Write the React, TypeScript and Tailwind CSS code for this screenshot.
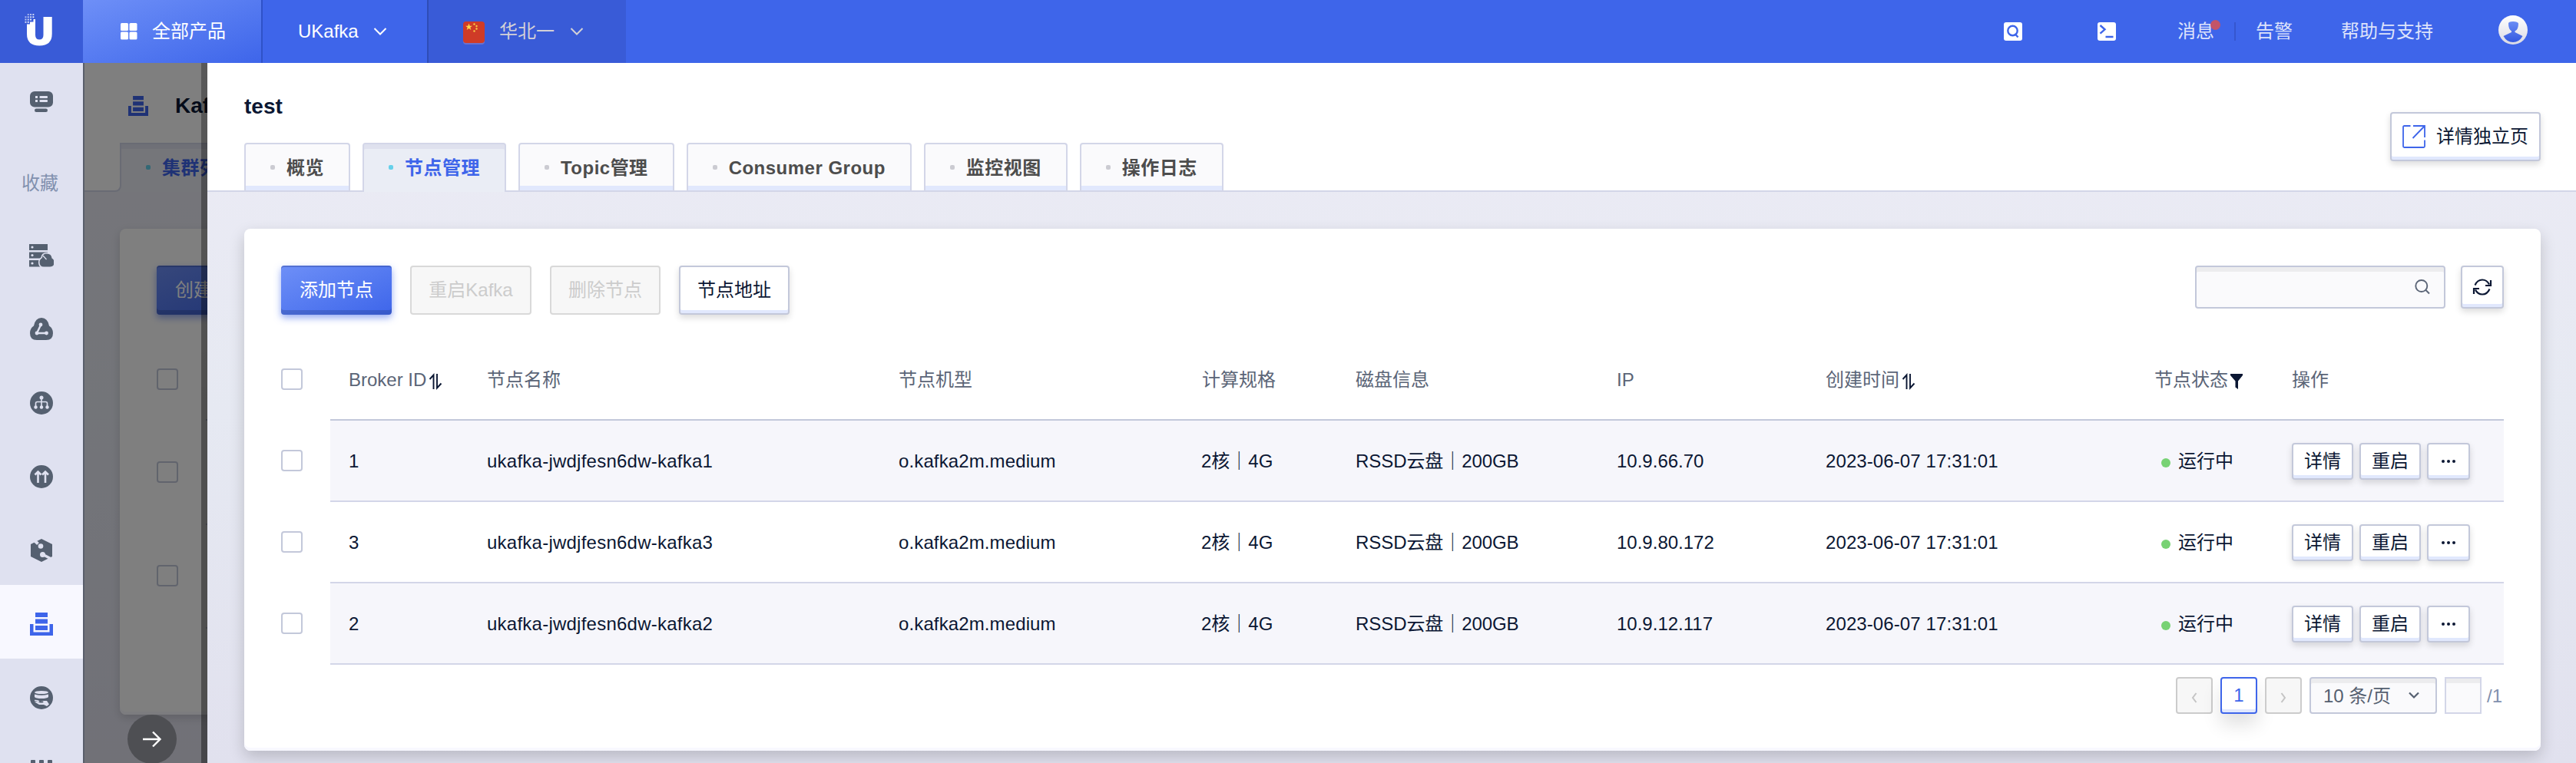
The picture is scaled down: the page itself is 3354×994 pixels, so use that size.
import React from "react";

const columns = "grid grid-cols-[180px_536px_395px_200px_340px_272px_428px_179px_1fr]";

const nodes = [
  { id: "1", name: "ukafka-jwdjfesn6dw-kafka1", ip: "10.9.66.70" },
  { id: "3", name: "ukafka-jwdjfesn6dw-kafka3", ip: "10.9.80.172" },
  { id: "2", name: "ukafka-jwdjfesn6dw-kafka2", ip: "10.9.12.117" },
];

const tabs = ["概览", "节点管理", "Topic管理", "Consumer Group", "监控视图", "操作日志"];

function Logo() {
  return (
    <svg width="44" height="46" viewBox="0 0 44 46" fill="#fff">
      <path d="M11.500 9H14V29.500Q14 35.500 19.300 35.500T24.500 29.500V6H35.700V28Q35.700 43.500 19.300 43.500T3 28V15.500H7V12.500H11.500Z" />
      {[0.5, 3.8, 7.1, 10.4].map((x, i) =>
        [2, 5.3, 8.6, 11.9].map((y, j) =>
          i + j > 0 && i + j < 5 ? (
            <rect key={`${x}-${y}`} x={x} y={y} width="1.900" height="1.900" opacity={0.5 + 0.1 * (i + j)} />
          ) : null,
        ),
      )}
    </svg>
  );
}

function Chevron({ color = "#fff" }: { color?: string }) {
  return (
    <svg width="18" height="12" viewBox="0 0 18 12" fill="none" stroke={color} strokeWidth="2">
      <path d="M1.500 2L9 9.500L16.500 2" />
    </svg>
  );
}

function KafkaIcon({ color, size }: { color: string; size: number }) {
  return (
    <svg width={size} height={size} viewBox="0 0 30 30" fill={color}>
      <path d="M7 0h16v6H7zM7 8.500h16v6H7zM7 17h16v6H7zM0 15h4.500v10.500h21V15H30v15H0z" />
    </svg>
  );
}

function Flag() {
  return (
    <svg width="28" height="30" viewBox="0 0 28 30">
      <rect y="4" width="28" height="26" rx="4" fill="#8f7fc4" opacity=".6" />
      <rect width="28" height="28" rx="4" fill="#cf3b27" />
      <path d="M7.500 2.500l1.200 3.200h3.200l-2.600 2l1 3.300l-2.800-2l-2.800 2l1-3.300l-2.600-2h3.200z" fill="#fbd84a" />
      <g fill="#f7c843">
        <circle cx="14.500" cy="3.500" r="1.200" />
        <circle cx="17.500" cy="6" r="1.200" />
        <circle cx="17.500" cy="9.500" r="1.200" />
        <circle cx="14.500" cy="12.500" r="1.200" />
      </g>
    </svg>
  );
}

function TopBar() {
  return (
    <header className="flex h-[82px] shrink-0 items-stretch bg-[#3e65ea] text-white">
      <div className="flex w-[108px] items-center bg-[#395bd7] pb-[4px] pl-[32px]">
        <Logo />
      </div>
      <div className="flex w-[232px] items-center bg-linear-to-br from-[#6e8ff7] to-[#3e65ea] pl-[49px]">
        <svg width="22" height="22" viewBox="0 0 22 22" fill="#fff">
          <rect width="10" height="10" rx="1.500" />
          <rect x="11.500" width="10" height="10" rx="1.500" />
          <rect y="11.500" width="10" height="10" rx="1.500" />
          <rect x="11.500" y="11.500" width="10" height="10" rx="1.500" />
        </svg>
        <span className="ml-[19px]">全部产品</span>
      </div>
      <div className="flex w-[216px] items-center border-l-2 border-[#2f52c8] pl-[46px]">
        <span>UKafka</span>
        <span className="ml-[19px]"><Chevron /></span>
      </div>
      <div className="flex w-[259px] items-center border-l-2 border-[#2f4db7] bg-[#395bd7] pl-[45px] text-[#d3d1d6]">
        <span className="pt-[4px]"><Flag /></span>
        <span className="ml-[19px]">华北一</span>
        <span className="ml-[20px]"><Chevron color="#d3d1d6" /></span>
      </div>
      <div className="flex flex-1 items-center justify-end pr-[63px] text-[#dde3fb]">
        <svg width="24" height="24" viewBox="0 0 24 24" fill="none" className="mr-[98px]">
          <rect width="24" height="24" rx="3" fill="#fff" />
          <circle cx="11.500" cy="11" r="6.200" stroke="#3e65ea" strokeWidth="2.400" />
          <path d="M14.500 15l4 4.500" stroke="#3e65ea" strokeWidth="2.400" />
        </svg>
        <svg width="24" height="24" viewBox="0 0 24 24" fill="none" className="mr-[80px]">
          <rect width="24" height="24" rx="3" fill="#fff" />
          <path d="M3.500 4l6 5.300l-6 5.300M10.500 19h10" stroke="#3e65ea" strokeWidth="2.400" />
        </svg>
        <span className="relative">
          消息
          <i className="absolute top-[3px] left-[43px] size-[13px] rounded-full bg-[#c35468]" />
        </span>
        <i className="mr-[26px] ml-[26px] h-[24px] w-[2px] bg-[#3556cf]" />
        <span>告警</span>
        <span className="ml-[63px]">帮助与支持</span>
        <svg width="38" height="38" viewBox="0 0 38 38" className="mb-[4px] ml-[85px]">
          <defs>
            <linearGradient id="ring" x1="0" y1="0" x2="0" y2="1">
              <stop offset="0" stopColor="#fff" />
              <stop offset="1" stopColor="#d9d9e4" />
            </linearGradient>
            <linearGradient id="person" x1="0" y1="0" x2="0" y2="1">
              <stop offset="0" stopColor="#6a8cf5" />
              <stop offset="1" stopColor="#3459e0" />
            </linearGradient>
          </defs>
          <circle cx="19" cy="19" r="19" fill="url(#ring)" />
          <path d="M13 10.500Q13 8 19 8T26 10.500Q26 19 21.500 20.500V22L31.500 27Q27 35 19 35T6.500 27L17 22V20.500Q13 18 13 10.500Z" fill="url(#person)" />
        </svg>
      </div>
    </header>
  );
}

const ink = "#556070";
const paper = "#dfe1f0";

const sideIcons: React.ReactNode[] = [
  <svg key="server" width="32" height="30" viewBox="0 0 32 30">
    <path d="M0 0h24v8H0zM0 10.500h24v8H0zM0 21h15v8.500H0z" fill={ink} />
    <circle cx="4" cy="4" r="1.600" fill={paper} />
    <circle cx="4" cy="14.500" r="1.600" fill={paper} />
    <circle cx="4" cy="25" r="1.600" fill={paper} />
    <path d="M19 29.500q-5.500 0-5.500-6q0-3.500 3.500-5.500q0-5.500 6-5.500t6.500 6q3 1.500 3 5.300q0 5.700-5.500 5.700z" fill={ink} stroke={paper} strokeWidth="3" paintOrder="stroke" />
    <path d="M18 15l4.500 5" stroke={paper} strokeWidth="1.200" />
  </svg>,
  <svg key="tri" width="30" height="30" viewBox="0 0 30 30">
    <path d="M15 0q8 0 10 10.500q5 3 5 9.500q0 9-9 9H9q-9 0-9-9q0-6.500 5-9.500Q7 0 15 0Z" fill={ink} />
    <path d="M14 9.500L9 20h12" fill="none" stroke={paper} strokeWidth="2.400" />
    <circle cx="14" cy="9" r="2.400" fill={paper} />
    <circle cx="9" cy="20" r="2.400" fill={paper} />
    <circle cx="21.500" cy="20" r="2.400" fill={paper} />
  </svg>,
  <svg key="tree" width="30" height="30" viewBox="0 0 30 30">
    <circle cx="15" cy="15" r="15" fill={ink} />
    <path d="M15 8v12M7.500 20v-4.500q0-2 2-2h11q2 0 2 2V20" fill="none" stroke={paper} strokeWidth="1.600" />
    <circle cx="15" cy="8" r="2.500" fill={paper} />
    <circle cx="7.500" cy="20.500" r="2.200" fill={paper} />
    <circle cx="15" cy="20.500" r="2.200" fill={paper} />
    <circle cx="22.500" cy="20.500" r="2.200" fill={paper} />
  </svg>,
  <svg key="up" width="30" height="30" viewBox="0 0 30 30">
    <circle cx="15" cy="15" r="15" fill={ink} />
    <path d="M10.500 23V9M6.500 12.500l4-4l4 4M20 23V9M16 12.500l4-4l4 4" fill="none" stroke={paper} strokeWidth="2.600" />
  </svg>,
  <svg key="hex" width="28" height="30" viewBox="0 0 28 30">
    <path d="M14 0l14 7v16l-14 7L0 23V7z" fill={ink} />
    <path d="M4 1.500L9.500 6.500" stroke={paper} strokeWidth="4" />
    <circle cx="13" cy="9.500" r="3.300" fill={paper} />
    <circle cx="15.500" cy="20.500" r="3.500" fill={paper} />
    <path d="M17 21l9.500 5" stroke={paper} strokeWidth="3.500" />
  </svg>,
  <KafkaIcon key="kafka" color="#3e65ea" size={30} />,
  <svg key="hand" width="30" height="30" viewBox="0 0 30 30">
    <circle cx="15" cy="15" r="15" fill={ink} />
    <ellipse cx="15" cy="8" rx="9" ry="2" fill={paper} />
    <path d="M6 10.500q9 2.500 18 0V14q-2 2-9 2T6 14z" fill={paper} />
    <path d="M6 18q4 0 6 1.500h5q1.500 1.500-1 2h-3M6 20.500l6 3.500h6l4 2l3-2.500l-3-4.500H17" fill={paper} />
    <path d="M6 18.500q3 0 6 1.200" stroke={paper} strokeWidth="1.500" />
  </svg>,
];

function Sidebar() {
  return (
    <nav className="flex w-[108px] shrink-0 flex-col overflow-hidden bg-[#dfe1f0]">
      <div className="flex h-[104px] shrink-0 items-center justify-center pb-[2px]">
        <svg width="30" height="28" viewBox="0 0 30 28">
          <rect width="30" height="20.500" rx="6" fill={ink} />
          <rect x="6" y="22.500" width="17" height="4.500" rx="2.200" fill={ink} />
          <rect x="7" y="6" width="3" height="3" fill={paper} />
          <rect x="7" y="11" width="3" height="3" fill={paper} />
          <rect x="12.500" y="6" width="10.500" height="3" rx="1" fill={paper} />
          <rect x="12.500" y="11" width="10.500" height="3" rx="1" fill={paper} />
        </svg>
      </div>
      <div className="flex h-[96px] shrink-0 items-center justify-center pt-[9px] pr-[4px] text-[#8190ae]">收藏</div>
      {sideIcons.map((icon, i) => (
        <div key={i} className={`flex h-[96px] shrink-0 items-center justify-center pt-[6px] ${i === 5 ? "bg-[#f8f8ff]" : ""}`}>
          {icon}
        </div>
      ))}
      <div className="flex shrink-0 justify-center gap-[4.500px] pt-[36px]">
        {[0, 1, 2].map((i) => (
          <i key={i} className="h-[6px] w-[6.500px] rounded-[1px] bg-[#556070]" />
        ))}
      </div>
    </nav>
  );
}

function Checkbox() {
  return <span className="block size-[28px] rounded-[4px] border-2 border-[#c3c8da] bg-white" />;
}

function Underlay() {
  return (
    <section className="relative w-[162px] shrink-0 overflow-hidden">
      <div className="flex h-full w-[600px] flex-col border-l-2 border-[#b3bcd6] bg-linear-to-b from-[#ecebf5] via-[#e7eaf3] to-[#e2e2ef]">
        <div className="flex h-[104px] shrink-0 items-center bg-white pt-[8px] pl-[57px]">
          <KafkaIcon color="#3e65ea" size={26} />
          <span className="ml-[35px] text-[28px] font-bold text-[#0b1733]">Kafka</span>
        </div>
        <div className="flex h-[64px] shrink-0 bg-[#eaedf5]">
          <div className="w-[48px] shrink-0 rounded-br-[8px] border-r-2 border-b-2 border-[#d3d6e8] bg-white" />
          <div className="flex flex-1 items-center border-t-2 border-[#d3d6e8] pl-[32px] shadow-[inset_0_6px_#dfe1ee]">
            <i className="mb-[2px] size-[6px] rounded-[2px] bg-[#66d0ea]" />
            <span className="ml-[15px] font-bold tracking-[.02em] text-[#3e65ea]">集群列表</span>
          </div>
        </div>
        <div className="mt-[48px] ml-[46px] flex h-[633px] shrink-0 flex-col rounded-[8px] bg-white pt-[48px] pl-[48px] shadow-[inset_0_-4px_#f8f8ff,0_4px_12px_rgba(0,0,0,.15)]">
          <PrimaryButton>创建集群</PrimaryButton>
          <div className="mt-[70px] flex items-center"><Checkbox /></div>
          <div className="mt-[38px] ml-[64px] h-[2px] bg-[#c3c8da]" />
          <div className="mt-[53px]"><Checkbox /></div>
          <div className="mt-[53px] ml-[64px] h-[2px] bg-[#d3d6e8]" />
          <div className="mt-[52px]"><Checkbox /></div>
          <div className="mt-[53px] ml-[64px] h-[2px] bg-[#d3d6e8]" />
        </div>
      </div>
      <div className="absolute inset-0 bg-black/50" />
      <div className="absolute inset-y-0 right-0 w-[8px] bg-linear-to-b from-black/30 via-black/38 to-black/38" />
      <div className="absolute top-[849px] left-[58px] flex size-[64px] items-center justify-center rounded-full bg-[#4e4f53]">
        <svg width="26" height="22" viewBox="0 0 26 22" fill="none" stroke="#fff" strokeWidth="2.400">
          <path d="M1 11h22.500M14 1.500l9.500 9.500l-9.500 9.500" />
        </svg>
      </div>
    </section>
  );
}

function PrimaryButton({ children }: { children: React.ReactNode }) {
  return (
    <button className="h-[64px] w-[144px] shrink-0 rounded-[4px] bg-linear-to-br from-[#6e8ff7] to-[#3e65ea] pb-[1px] text-white shadow-[inset_0_2px_rgba(30,50,130,.3),inset_0_-6px_rgba(40,60,130,.3),0_4px_10px_rgba(62,101,234,.55)]">
      {children}
    </button>
  );
}

function PlainButton({ className, children }: { className: string; children: React.ReactNode }) {
  return (
    <button
      className={`flex shrink-0 items-center justify-center rounded-[4px] border-2 border-[#c3c8da] bg-white pb-[1px] text-[#0b1733] shadow-[inset_0_-4px_#e1e8fd,0_4px_8px_rgba(0,0,0,.14)] ${className}`}
    >
      {children}
    </button>
  );
}

function DisabledButton({ className, children }: { className: string; children: React.ReactNode }) {
  return (
    <button className={`flex shrink-0 items-center justify-center rounded-[4px] border-2 border-[#d9d9d9] bg-[#f7f7f7] pb-[1px] text-[#cccccc] ${className}`}>
      {children}
    </button>
  );
}

function SortIcon() {
  return (
    <svg width="18" height="22" viewBox="0 0 18 22" fill="none" stroke="#0b1733" strokeWidth="1.900" className="mt-[4px] ml-[3px]">
      <path d="M6.500 21V2.500L1.500 8M11 1v18.500l5.500-6" />
    </svg>
  );
}

function Tab({ label, active }: { label: string; active: boolean }) {
  const look = active
    ? "relative h-[64px] bg-[#eaedf5] text-[#3e65ea] shadow-[inset_0_6px_#dfe1ee] pb-[1px]"
    : "h-[62px] bg-[#fafafc] text-[#4d4d4d] shadow-[inset_0_-6px_#e1e8fd] pt-[1px]";
  return (
    <div className={`flex items-center rounded-t-[4px] border-x-2 border-t-2 border-[#d3d6e8] px-[32px] ${look}`}>
      <i className={`mb-[2px] size-[6px] rounded-[2px] ${active ? "bg-[#66d0ea]" : "bg-[#cbcbd2]"}`} />
      <span className="ml-[15px] font-bold tracking-[.0205em] whitespace-nowrap">{label}</span>
    </div>
  );
}

function DrawerHeader() {
  return (
    <div className="flex h-[168px] shrink-0 justify-between border-b-2 border-[#d3d6e8] bg-white pr-[46px] pl-[48px]">
      <div className="flex flex-col">
        <h1 className="h-[104px] pt-[37px] text-[28px] leading-[40px] font-bold text-[#0b1733]">test</h1>
        <div className="flex h-[62px] items-start gap-[16px]">
          {tabs.map((t, i) => (
            <Tab key={t} label={t} active={i === 1} />
          ))}
        </div>
      </div>
      <div className="pt-[64px]">
        <PlainButton className="h-[64px] w-[196px]">
          <svg width="30" height="30" viewBox="0 0 30 30" fill="none" stroke="#3e65ea" strokeWidth="1.800">
            <path d="M10.500 1H2.500Q1 1 1 2.500V27.500Q1 29 2.500 29H27.500Q29 29 29 27.500V19.500M14 1H29V16M28.500 1.500L13.500 17" />
          </svg>
          <span className="ml-[14px]">详情独立页</span>
        </PlainButton>
      </div>
    </div>
  );
}

function Toolbar() {
  return (
    <div className="flex items-start justify-between">
      <div className="flex gap-[24px]">
        <PrimaryButton>添加节点</PrimaryButton>
        <DisabledButton className="h-[64px] w-[158px]">重启Kafka</DisabledButton>
        <DisabledButton className="h-[64px] w-[144px]">删除节点</DisabledButton>
        <PlainButton className="h-[64px] w-[144px]">节点地址</PlainButton>
      </div>
      <div className="flex gap-[20px]">
        <div className="flex h-[56px] w-[326px] items-center justify-end rounded-[4px] border-2 border-[#c3c8da] bg-[#fafafc] pr-[18px] shadow-[inset_0_6px_#ececee]">
          <svg width="20" height="20" viewBox="0 0 20 20" fill="none" stroke="#5b6577" strokeWidth="1.900">
            <circle cx="8.800" cy="8.500" r="7.500" />
            <path d="M14 13.500l5 5" />
          </svg>
        </div>
        <PlainButton className="h-[56px] w-[56px]">
          <svg width="26" height="22" viewBox="0 0 26 22" fill="none" stroke="#0b1733" strokeWidth="2.200">
            <path d="M3.500 8.500Q6.500 1.500 13 1.500Q19 1.500 22 7.500M24 2V9H17M22.500 13.500Q19.500 20.500 13 20.500Q7 20.500 4 14.500M2 20V13H9" />
          </svg>
        </PlainButton>
      </div>
    </div>
  );
}

function NodeTable() {
  return (
    <div className="mt-[32px]">
      <div className="flex h-[106px]">
        <div className="flex w-[64px] shrink-0 items-center pb-[2px]"><Checkbox /></div>
        <div className={`${columns} flex-1 items-center border-b-2 border-[#c3c8da] pt-[2px] text-[#5b6577]`}>
          <div className="flex items-center pl-[24px]">Broker ID<SortIcon /></div>
          <div className="pl-[24px]">节点名称</div>
          <div className="pl-[24px]">节点机型</div>
          <div className="pl-[24px]">计算规格</div>
          <div className="pl-[24px]">磁盘信息</div>
          <div className="pl-[24px]">IP</div>
          <div className="flex items-center pl-[24px]">创建时间<SortIcon /></div>
          <div className="flex items-center pl-[24px]">
            节点状态
            <svg width="16" height="20" viewBox="0 0 16 20" fill="#0b1733" className="mt-[4px] ml-[3px]">
              <path d="M0 0h16v2l-6 7.500V20L6.500 17.500V9.500L0 2z" />
            </svg>
          </div>
          <div className="pl-[24px]">操作</div>
        </div>
      </div>
      {nodes.map((n, i) => (
        <div key={n.id} className="flex h-[106px]">
          <div className="flex w-[64px] shrink-0 items-center pb-[2px]"><Checkbox /></div>
          <div className={`${columns} flex-1 items-center border-b-2 border-[#d3d6e8] pt-[2px] text-[#0b1733] ${i % 2 === 0 ? "bg-[#f6f6fb]" : "bg-white"}`}>
            <div className="pl-[24px]">{n.id}</div>
            <div className="pl-[24px] tracking-[.01em]">{n.name}</div>
            <div className="pl-[24px] tracking-[.005em]">o.kafka2m.medium</div>
            <div className="pl-[23px]">2核｜4G</div>
            <div className="pl-[24px] tracking-[-.003em]">RSSD云盘｜200GB</div>
            <div className="pl-[24px]">{n.ip}</div>
            <div className="pl-[24px] tracking-[.004em]">2023-06-07 17:31:01</div>
            <div className="flex items-center pl-[33px]">
              <i className="mt-[4px] mr-[10px] size-[12px] rounded-full bg-[#78d274]" />
              运行中
            </div>
            <div className="flex gap-[8px] pl-[24px]">
              <PlainButton className="h-[48px] w-[80px]">详情</PlainButton>
              <PlainButton className="h-[48px] w-[80px]">重启</PlainButton>
              <PlainButton className="h-[48px] w-[56px]">
                <svg width="20" height="6" viewBox="0 0 20 6" fill="#0b1733">
                  <circle cx="3" cy="3" r="2" />
                  <circle cx="10" cy="3" r="2" />
                  <circle cx="17" cy="3" r="2" />
                </svg>
              </PlainButton>
            </div>
          </div>
        </div>
      ))}
    </div>
  );
}

function Pagination() {
  const box = "flex h-[48px] items-center justify-center rounded-[4px] border-2";
  return (
    <div className="mt-[16px] flex items-center justify-end pr-[2px]">
      <div className={`${box} w-[48px] border-[#cccccc] bg-[#f7f7f7]`}>
        <svg width="8" height="14" viewBox="0 0 8 14" fill="none" stroke="#c4c4c4" strokeWidth="2" className="mt-[5px]">
          <path d="M6.500 1L2 7l4.500 6" />
        </svg>
      </div>
      <div className={`${box} ml-[10px] w-[48px] border-[#3e65ea] bg-white text-[#3e65ea] shadow-[inset_0_-4px_#e1e8fd,0_14px_24px_rgba(0,0,0,.12)]`}>1</div>
      <div className={`${box} ml-[10px] w-[48px] border-[#cccccc] bg-[#f7f7f7]`}>
        <svg width="8" height="14" viewBox="0 0 8 14" fill="none" stroke="#c4c4c4" strokeWidth="2" className="mt-[5px]">
          <path d="M1.500 1L6 7l-4.500 6" />
        </svg>
      </div>
      <div className="ml-[10px] flex h-[48px] w-[166px] items-center justify-between rounded-[4px] border-2 border-[#c3c8da] bg-[#fafafc] pr-[21px] pl-[16px] text-[#556070] shadow-[inset_0_6px_#ececee]">
        <span className="pt-[2px]">10 条/页</span>
        <svg width="14" height="10" viewBox="0 0 14 10" fill="none" stroke="#556070" strokeWidth="2.200">
          <path d="M1 1.500l6 6l6-6" />
        </svg>
      </div>
      <div className="ml-[10px] h-[48px] w-[48px] border-2 border-[#d3d6e8] bg-[#fafafc] shadow-[inset_0_6px_#ececee]" />
      <span className="ml-[7px] pt-[1px] text-[#8190ae]">/1</span>
    </div>
  );
}

export default function App() {
  return (
    <div className="flex h-[994px] w-full flex-col overflow-hidden bg-white font-['Liberation_Sans','Noto_Sans_CJK_SC',sans-serif] text-[24px] leading-[36px]">
      <TopBar />
      <div className="flex min-h-0 flex-1">
        <Sidebar />
        <Underlay />
        <main className="flex min-w-0 flex-1 flex-col bg-linear-to-b from-[#ecebf5] via-[#e6e9f2] to-[#e1e1ee]">
          <DrawerHeader />
          <div className="mt-[48px] mr-[46px] ml-[48px] h-[680px] shrink-0 rounded-[8px] bg-white p-[48px] shadow-[inset_0_-4px_#f8f8ff,0_8px_20px_rgba(0,0,0,.18)]">
            <Toolbar />
            <NodeTable />
            <Pagination />
          </div>
        </main>
      </div>
    </div>
  );
}
